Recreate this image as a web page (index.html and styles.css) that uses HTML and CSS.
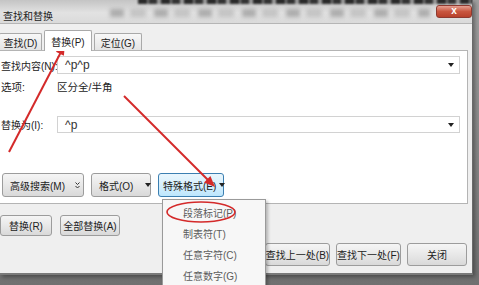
FILE: index.html
```html
<!DOCTYPE html>
<html lang="zh-CN">
<head>
<meta charset="UTF-8">
<title>查找和替换</title>
<link rel="stylesheet" href="styles.css">
</head>
<body>
<div class="window">
  <div class="titlebar">
    <span class="behind"></span>
    <span class="glass"></span>
    <span class="title">查找和替换</span>
    <span class="close">x</span>
  </div>
  <div class="tabs">
    <span class="tab first">查找(D)</span>
    <span class="tab active">替换(P)</span>
    <span class="tab">定位(G)</span>
  </div>
  <div class="panel">
    <div class="field">
      <span class="label">查找内容(N):</span>
      <div class="combo"><span>^p^p</span><span class="caret"></span></div>
    </div>
    <div class="options">
      <span class="label">选项:</span>
      <span>区分全/半角</span>
    </div>
    <div class="field replace">
      <span class="label">替换为(I):</span>
      <div class="combo"><span>^p</span><span class="caret"></span></div>
    </div>
    <div class="btnrow">
      <span class="btn more">高级搜索(M)
        <svg width="5" height="7" viewBox="0 0 5 7"><path d="M0.5 0.5 L2.5 2.5 L4.5 0.5 M0.5 4 L2.5 6 L4.5 4" fill="none" stroke="#333" stroke-width="1"/></svg>
      </span>
      <span class="btn fmt">格式(O)<span class="caret"></span></span>
      <span class="btn fmt special">特殊格式(E)<span class="caret"></span></span>
    </div>
  </div>
  <div class="footer">
    <div class="row-left">
      <span class="btn w52">替换(R)</span>
      <span class="btn w60">全部替换(A)</span>
    </div>
    <div class="row-right">
      <span class="btn w65">查找上一处(B)</span>
      <span class="btn w65">查找下一处(F)</span>
      <span class="btn w60">关闭</span>
    </div>
  </div>
</div>

<div class="menu">
  <div class="menu-item">段落标记(P)</div>
  <div class="menu-item">制表符(T)</div>
  <div class="menu-item">任意字符(C)</div>
  <div class="menu-item">任意数字(G)</div>
</div>

<!-- red annotation marks drawn over the screenshot -->
<svg class="marks" width="479" height="285" viewBox="0 0 479 285">
  <line x1="9" y1="152" x2="61" y2="52" stroke="#d42a2a" stroke-width="2"/>
  <polygon points="65,44 63.9,55.8 55.9,51.7" fill="#d42a2a"/>
  <line x1="124" y1="96" x2="208" y2="180" stroke="#d42a2a" stroke-width="2"/>
  <polygon points="215,187 210.4,176 204,182.4" fill="#d42a2a"/>
  <ellipse cx="201" cy="212" rx="34" ry="10" fill="none" stroke="#d42a2a" stroke-width="1.6"/>
</svg>
</body>
</html>
```

FILE: styles.css
```css
body { margin: 0; width: 479px; height: 285px; overflow: hidden; position: relative; background: linear-gradient(#a0a0a0, #707070); font-family: "Liberation Sans", "Noto Sans CJK SC", sans-serif; font-size: 10px; color: #222; }

.window { width: 472px; height: 273px; background: #efefef; border-right: 1px solid #6a6a6a; border-bottom: 2px solid #7a7a7a; display: flex; flex-direction: column; box-shadow: 2px 2px 4px rgba(0,0,0,.35); }

.titlebar { height: 24px; flex: none; position: relative; display: flex; align-items: flex-start; padding: 0 0 0 3px; box-sizing: border-box; background: linear-gradient(#c4c4c4, #e2e2e2 55%, #dadada); border-bottom: 1px solid #b5b5b5; overflow: hidden; }
/* blurred screen content seen through the glass frame */
.behind { position: absolute; left: 138px; top: -2px; width: 345px; height: 6px; background: repeating-linear-gradient(90deg, #2a2a2a 0 9px, #777 9px 11px, #333 11px 19px, #9a9a9a 19px 23px); filter: blur(1px); }
.glass { position: absolute; left: 110px; top: 9px; width: 320px; height: 8px; background: repeating-linear-gradient(90deg, rgba(120,120,120,.5) 0 14px, transparent 14px 20px, rgba(140,140,140,.35) 20px 36px, transparent 36px 44px); filter: blur(2px); }
.title { margin-top: 8px; position: relative; color: #1e1e1e; }
.close { margin: 5px 0 0 auto; position: relative; width: 36px; height: 13px; box-sizing: border-box; border: 1px solid #8e3a30; border-radius: 3px; background: linear-gradient(#e6a092, #c9563f 50%, #b8412c); color: #fff; font-weight: bold; font-size: 10px; line-height: 10px; text-align: center; }

.tabs { height: 26px; flex: none; display: flex; align-items: flex-end; gap: 2px; position: relative; z-index: 1; }
.tab { height: 17px; width: 48px; box-sizing: border-box; border: 1px solid #a9a9a9; border-bottom: none; border-radius: 2px 2px 0 0; background: linear-gradient(#f8f8f8, #e4e4e4); display: flex; align-items: center; justify-content: center; }
.tab.first { width: 43px; margin-left: -1px; }
.tab.active { height: 21px; background: #fff; margin-bottom: -1px; }

.panel { width: 468px; height: 154px; flex: none; box-sizing: border-box; background: #fff; border: 1px solid #b4b4b4; border-left: none; padding: 5px 7px 0 1px; }
.field { display: flex; align-items: center; height: 18px; }
.label { width: 56px; flex: none; white-space: nowrap; }
.combo { flex: 1; height: 100%; box-sizing: border-box; border: 1px solid #d2d2d2; display: flex; align-items: center; justify-content: space-between; padding: 0 5px 0 7px; font-size: 12px; color: #333; }
.caret { width: 0; height: 0; border-left: 3px solid transparent; border-right: 3px solid transparent; border-top: 4px solid #222; }
.options { margin-top: 5px; height: 14px; display: flex; align-items: center; font-size: 10.5px; }
.replace { margin-top: 23px; height: 17px; }

.btnrow { margin-top: 40px; display: flex; gap: 7px; }
.btn { height: 24px; box-sizing: border-box; border: 1px solid #9c9c9c; border-radius: 3px; background: linear-gradient(#f5f5f5, #e8e8e8 50%, #d9d9d9); display: flex; align-items: center; justify-content: center; white-space: nowrap; color: #222; }
.more { width: 82px; margin-left: 1px; justify-content: flex-start; padding-left: 7px; gap: 10px; }
.fmt { width: 60px; justify-content: flex-start; padding-left: 7px; gap: 12px; }
.special { width: 66px; gap: 3px; padding-left: 4px; border-color: #3c7fb1; background: linear-gradient(#eaf6fd, #d7effc 50%, #bde6fd); }

.footer { flex: 1; padding: 11px 5px 0 0; }
.row-left { display: flex; gap: 8px; }
.row-left .btn { height: 21px; }
.row-right { margin-top: 7px; display: flex; justify-content: flex-end; gap: 6px; }
.row-right .btn { height: 23px; }
.w52 { width: 52px; }
.w60 { width: 60px; }
.w65 { width: 65px; }

.menu { position: absolute; left: 162px; top: 199px; width: 104px; height: 100px; box-sizing: border-box; padding-top: 3px; background: #f7f7f7; border: 1px solid #9a9a9a; box-shadow: 2px 2px 3px rgba(0,0,0,.25); }
.menu-item { height: 21px; line-height: 21px; padding-left: 20px; color: #5c5c5c; }

.marks { position: absolute; left: 0; top: 0; pointer-events: none; }
```
